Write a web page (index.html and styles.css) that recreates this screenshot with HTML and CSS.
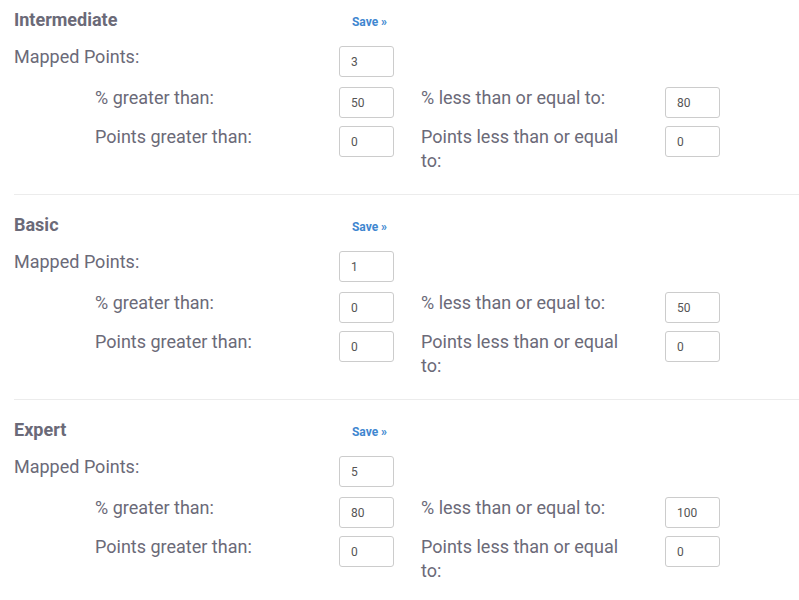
FILE: index.html
```html
<!DOCTYPE html>
<html>
<head>
<meta charset="utf-8">
<link rel="stylesheet" href="styles.css">
</head>
<body>
<div class="page">
  <section class="level">
    <div class="grid">
      <h3 class="title">Intermediate</h3>
      <a class="save" href="#">Save »</a>
      <div class="lbl">Mapped Points:</div>
      <input class="box" type="text" value="3">
      <div class="lbl sub">% greater than:</div>
      <input class="box" type="text" value="50">
      <div class="rlbl">% less than or equal to:</div>
      <input class="box" type="text" value="80">
      <div class="lbl sub">Points greater than:</div>
      <input class="box" type="text" value="0">
      <div class="rlbl">Points less than or equal to:</div>
      <input class="box" type="text" value="0">
    </div>
  </section>
  <section class="level">
    <div class="grid">
      <h3 class="title">Basic</h3>
      <a class="save" href="#">Save »</a>
      <div class="lbl">Mapped Points:</div>
      <input class="box" type="text" value="1">
      <div class="lbl sub">% greater than:</div>
      <input class="box" type="text" value="0">
      <div class="rlbl">% less than or equal to:</div>
      <input class="box" type="text" value="50">
      <div class="lbl sub">Points greater than:</div>
      <input class="box" type="text" value="0">
      <div class="rlbl">Points less than or equal to:</div>
      <input class="box" type="text" value="0">
    </div>
  </section>
  <section class="level last">
    <div class="grid">
      <h3 class="title">Expert</h3>
      <a class="save" href="#">Save »</a>
      <div class="lbl">Mapped Points:</div>
      <input class="box" type="text" value="5">
      <div class="lbl sub">% greater than:</div>
      <input class="box" type="text" value="80">
      <div class="rlbl">% less than or equal to:</div>
      <input class="box" type="text" value="100">
      <div class="lbl sub">Points greater than:</div>
      <input class="box" type="text" value="0">
      <div class="rlbl">Points less than or equal to:</div>
      <input class="box" type="text" value="0">
    </div>
  </section>
</div>
</body>
</html>
```

FILE: styles.css
```css
html, body {
  margin: 0;
  padding: 0;
  background: #ffffff;
  overflow: hidden;
}
body {
  font-family: Roboto, "Liberation Sans", Arial, sans-serif;
  color: #6b6a78;
}
.page {
  padding: 10px 0 0 14px;
}
.level {
  border-bottom: 1px solid #ececec;
  padding-bottom: 21px;
  margin-bottom: 20px;
}
.level.last {
  border-bottom: none;
  padding-bottom: 0;
  margin-bottom: 0;
}
.grid {
  display: grid;
  grid-template-columns: 325px 55px 27px 244px 55px;
  grid-template-rows: 26px 31px 31px auto;
  row-gap: 10px;
  align-items: start;
}
.grid > .title {
  grid-column: 1;
}
.grid > .save {
  grid-column: 2;
}
.grid > .lbl {
  grid-column: 1;
}
.grid > .lbl + .box {
  grid-column: 2;
}
.grid > .rlbl {
  grid-column: 4;
}
.grid > .rlbl + .box {
  grid-column: 5;
}
.title {
  margin: 0;
  font-size: 18px;
  font-weight: 700;
  line-height: 20px;
  color: #6b6a78;
}
.save {
  font-size: 12px;
  font-weight: 700;
  line-height: 20px;
  margin-top: 2px;
  padding-left: 6px;
  color: #3f87d0;
  text-decoration: none;
  text-align: center;
  white-space: nowrap;
}
.lbl, .rlbl {
  font-size: 18px;
  line-height: 24px;
  margin-top: -1px;
}
.sub {
  padding-left: 81px;
}
.rlbl {
  width: 205px;
}
.grid > :nth-child(n+9) {
  margin-top: -2px;
}
.grid > .lbl:nth-child(n+9),
.grid > .rlbl:nth-child(n+9) {
  margin-top: -3px;
}
.box {
  box-sizing: border-box;
  width: 55px;
  height: 31px;
  margin: 0;
  padding: 0 11px;
  border: 1px solid #cccccc;
  border-radius: 3px;
  font-family: Roboto, "Liberation Sans", Arial, sans-serif;
  font-size: 12px;
  color: #555555;
  background: #ffffff;
  outline: none;
}
```
